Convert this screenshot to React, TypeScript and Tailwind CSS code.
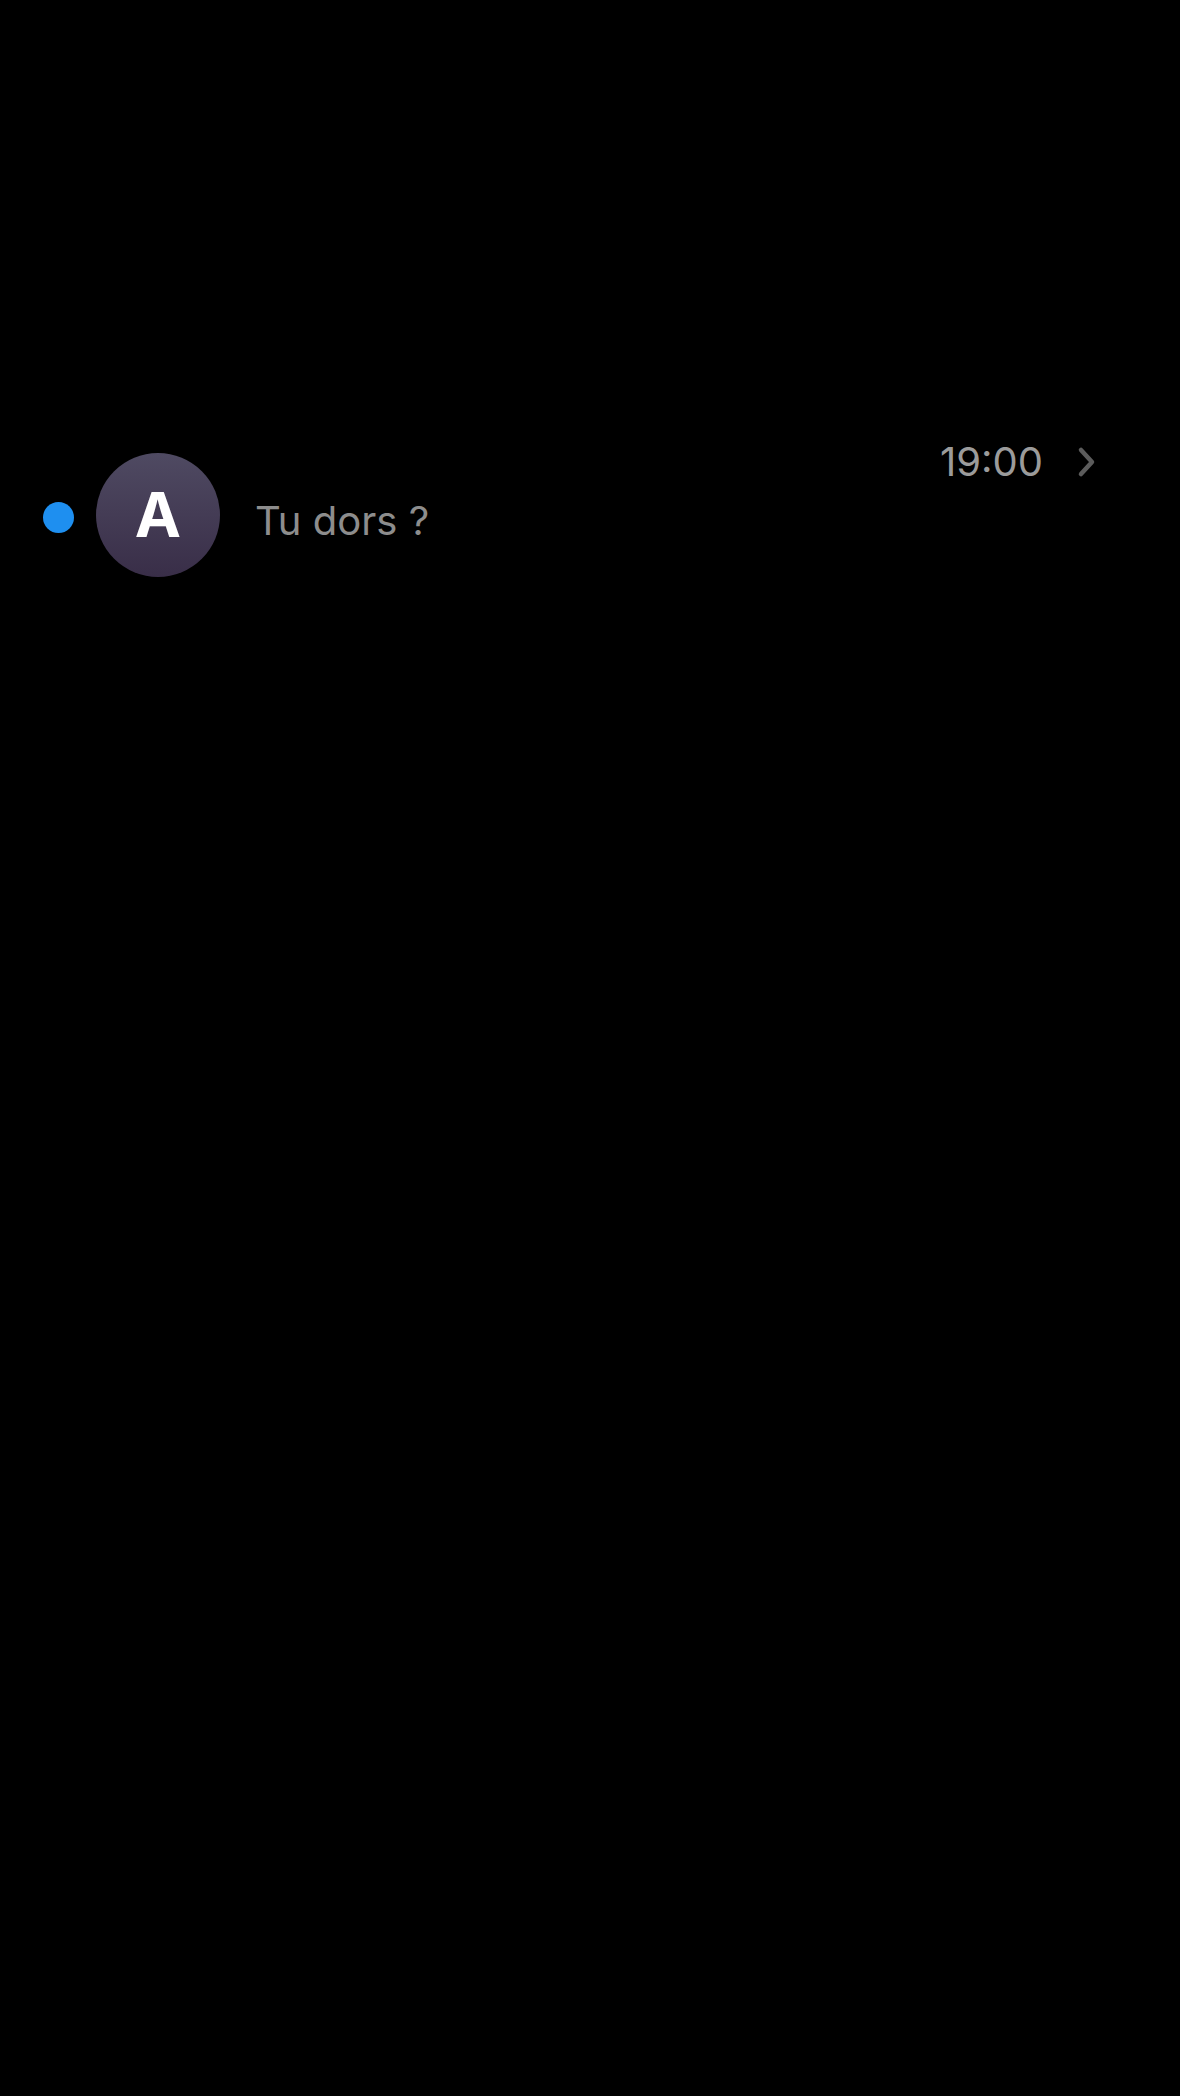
function Chevron() {
  return (
    <svg width="22" height="32" viewBox="0 0 22 32" fill="none" className="shrink-0">
      <polyline
        points="5,4 16,16 5,28"
        stroke="#5c5c5c"
        strokeWidth="4.5"
        strokeLinecap="round"
        strokeLinejoin="round"
      />
    </svg>
  );
}

function ConversationRow() {
  return (
    <div className="flex items-start pl-[43px] pr-[82px]">
      <div className="mt-[49px] h-[31px] w-[31px] shrink-0 rounded-full bg-[#1e8ff0]" />
      <div className="ml-[22px] flex h-[124px] w-[124px] shrink-0 items-center justify-center rounded-full bg-gradient-to-b from-[#4f4a62] to-[#392e48]">
        <span className="font-['Inter',sans-serif] text-[62px] font-bold leading-none text-white">A</span>
      </div>
      <div className="ml-[35px] flex flex-1 flex-col">
        <div className="-mt-[11px] flex items-center justify-end gap-[33px]">
          <span className="font-['Inter',sans-serif] text-[40px] leading-none text-[#9b9b9b]">19:00</span>
          <Chevron />
        </div>
        <p className="mt-[19px] font-['Inter',sans-serif] text-[40px] leading-none text-[#8d8d8d]">Tu dors ?</p>
      </div>
    </div>
  );
}

export default function App() {
  return (
    <div className="min-h-[2096px] bg-black pt-[453px]">
      <ConversationRow />
    </div>
  );
}
